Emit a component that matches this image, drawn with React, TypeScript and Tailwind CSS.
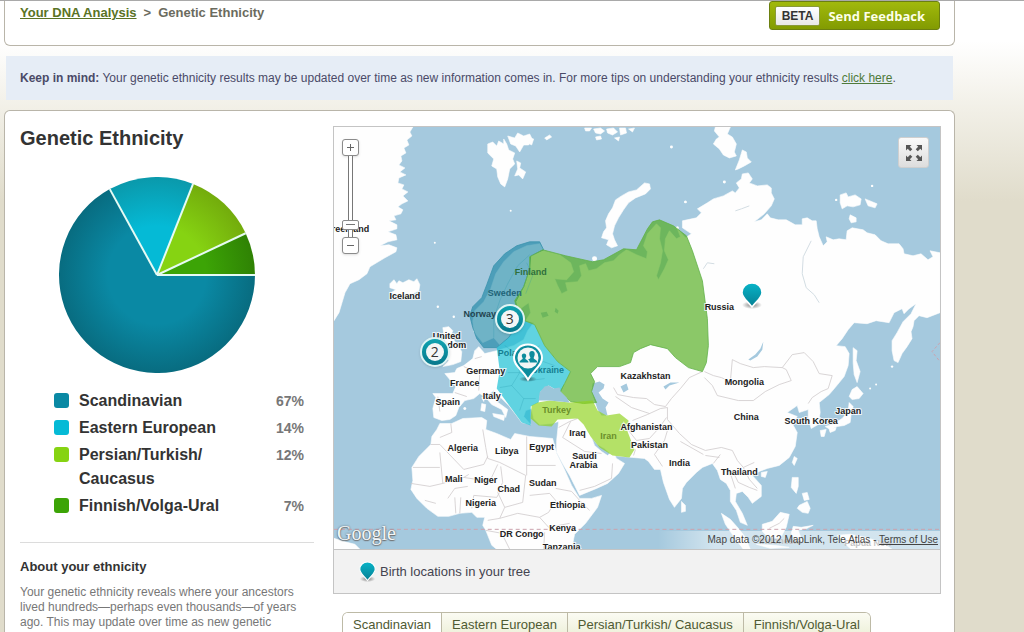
import React from 'react';

interface Ethnicity {
  name: string;
  percent: number;
  center: string;
  edge: string;
}

interface MapLabel {
  text: string;
  x: number;
  y: number;
  tint?: string;
}

const ethnicities: Ethnicity[] = [
  { name: 'Scandinavian', percent: 67, center: '#0a89a4', edge: '#086c80' },
  { name: 'Eastern European', percent: 14, center: '#05bad6', edge: '#0a99ab' },
  { name: 'Persian/Turkish/ Caucasus', percent: 12, center: '#86d312', edge: '#73ac0c' },
  { name: 'Finnish/Volga-Ural', percent: 7, center: '#3ca406', edge: '#2f8204' },
];

const labels: MapLabel[] = [
  { text: 'Greenland', x: 347, y: 231 },
  { text: 'Iceland', x: 405, y: 298 },
  { text: 'Finland', x: 531, y: 274, tint: '#2f6f3c' },
  { text: 'Sweden', x: 505, y: 295, tint: '#1f6478' },
  { text: 'Norway', x: 480, y: 316, tint: '#23434f' },
  { text: 'United', x: 447, y: 338 },
  { text: 'Kingdom', x: 447, y: 347 },
  { text: 'Poland', x: 513, y: 355, tint: '#157f92' },
  { text: 'Ukraine', x: 548, y: 372, tint: '#157f92' },
  { text: 'Germany', x: 486, y: 373 },
  { text: 'France', x: 465, y: 385 },
  { text: 'Italy', x: 492, y: 398 },
  { text: 'Spain', x: 448, y: 404 },
  { text: 'Turkey', x: 557, y: 412, tint: '#6b8f2b' },
  { text: 'Iran', x: 609, y: 439, tint: '#6b8f2b' },
  { text: 'Iraq', x: 578, y: 436 },
  { text: 'Saudi', x: 585, y: 459 },
  { text: 'Arabia', x: 584, y: 468 },
  { text: 'Algeria', x: 463, y: 451 },
  { text: 'Libya', x: 507, y: 454 },
  { text: 'Egypt', x: 542, y: 450 },
  { text: 'Mali', x: 454, y: 482 },
  { text: 'Niger', x: 486, y: 483 },
  { text: 'Chad', x: 509, y: 492 },
  { text: 'Sudan', x: 543, y: 486 },
  { text: 'Nigeria', x: 481, y: 506 },
  { text: 'Ethiopia', x: 568, y: 508 },
  { text: 'Kenya', x: 563, y: 531 },
  { text: 'DR Congo', x: 522, y: 537 },
  { text: 'Tanzania', x: 562, y: 550 },
  { text: 'Russia', x: 720, y: 309 },
  { text: 'Kazakhstan', x: 646, y: 378 },
  { text: 'Afghanistan', x: 647, y: 430 },
  { text: 'Pakistan', x: 650, y: 448 },
  { text: 'India', x: 680, y: 466 },
  { text: 'Mongolia', x: 745, y: 384 },
  { text: 'China', x: 747, y: 419 },
  { text: 'South Korea', x: 812, y: 423 },
  { text: 'Japan', x: 849, y: 413 },
  { text: 'Thailand', x: 740, y: 475 },
  { text: 'Indonesia', x: 781, y: 544, tint: '#8a8a8a' },
  { text: 'Papua New', x: 869, y: 546, tint: '#8a8a8a' },
];

const land = [
  // Greenland
  'M334 126H413L410 131 412 135 407 139 409 144 404 147 406 152 401 155 402 160 399 164 405 167 400 171 406 174 399 177 398 182 404 184 402 188 408 191 403 195 408 200 402 203 398 206 403 209 401 213 394 215 396 219 389 220 397 224 397 228 388 231 396 234 397 239 388 241 380 245 389 244 397 247 396 251 385 257 370 266 367 273 359 279 350 283 345 292 342 302 339 312 334 320Z',
  // Iceland
  'M390 283L394 279 397 283 399 280 403 282 409 279 414 281 417 278 420 284 419 290 413 293 405 296 397 294 391 292 396 289 390 287Z',
  // Svalbard
  'M488 143L493 141 497 145 499 140 504 143 504 138 507 143 509 149 515 152 513 158 515 163 510 168 508 178 505 186 501 183 498 176 497 168 492 165 494 158 488 152Z',
  'M508 135L515 137 518 132 524 135 530 133 533 139 529 144 524 144 520 151 516 145 511 143Z',
  'M517 160L521 162 520 167 526 171 523 178 519 174 515 175 518 168Z',
  // Novaya Zemlya
  'M645 182L650 183 651 188 646 193 636 197 629 202 624 209 619 217 615 225 613 233 615 239 618 245 612 247 607 244 609 239 602 237 604 231 607 227 606 220 609 213 613 207 616 199 622 195 629 191 637 189Z',
  // Franz Josef Land
  'M585 127H592L590 130 586 130ZM594 128L601 127 605 130 601 133 596 132ZM607 128L614 127 618 131 613 134 608 132ZM620 127H626L627 132 621 134ZM629 128L635 127 633 131ZM596 136L601 135 602 138 597 139ZM615 137L620 136 619 140ZM545 137L550 134 552 136 547 139ZM530 137L534 138 532 144 530 143Z',
  // Severnaya Zemlya
  'M716 126H731L728 133 733 136 737 143 735 151 737 155 730 157 724 154 720 148 714 143 717 138 720 136 715 130Z',
  'M743 149L747 151 748 157 752 161 745 165 739 168 736 169 740 159Z',
  // New Siberian Islands
  'M841 194L847 192 849 196 856 194 862 198 861 204 854 206 848 205 843 208 841 202ZM866 198L871 200 878 203 876 207 869 205ZM851 214L857 217 857 221 852 222 850 218Z',
  // Eurasia
  'M474 331L473 320 475 310 484 301 491 288 496 273 504 261 514 251 527 245 540 243 544 250 560 254 571 262 574 271 567 279 555 278 558 285 562 293 568 290 566 282 578 281 582 275 580 265 586 263 589 270 597 268 605 262 614 260 620 254 627 249 637 254 647 258 648 251 644 245 648 233 657 223 661 227 660 238 663 250 661 262 657 275 659 279 665 268 669 259 665 250 666 238 670 230 677 238 681 236 678 228 686 237 692 233 683 227 683 220 697 217 702 212 698 208 708 202 714 198 724 195 733 190 736 192 740 187 737 182 742 178 743 173 749 172 753 178 750 182 758 185 768 184 772 187 772 192 775 198 772 205 765 213 755 221 762 219 768 213 771 217 779 219 787 219 796 224 803 224 803 218 808 217 813 220 817 220 818 228 820 236 824 245 828 241 827 236 834 239 840 238 847 239 848 230 853 227 864 229 868 232 876 234 882 240 889 243 900 243 904 248 905 253 914 255 922 253 929 259 934 256 931 250 941 252V312L928 317 920 315 915 320 914 326 912 331 913 338 908 346 903 353 899 362 895 360 893 350 893 340 898 332 904 321 912 313 917 303 910 308 905 313 903 308 895 312 890 322 877 320 868 323 855 322 849 329 843 338 837 345 846 346 850 353 849 365 845 376 836 387 830 394 820 402 821 412 819 424 812 428 809 418 809 409 800 412 798 405 788 412 798 416 793 423 798 432 796 446 790 457 780 465 768 468 760 471 753 475 762 485 762 496 753 503 749 497 743 491 737 493 736 501 743 513 748 525 741 522 737 510 731 501 731 490 727 483 721 479 718 470 713 463 703 467 697 472 687 482 683 488 682 498 675 507 670 499 664 482 661 469 655 469 649 461 645 458 633 457 613 455 605 448 598 444 592 437 595 445 602 451 608 455 613 451 617 458 625 463 619 473 608 483 597 488 580 495 575 485 570 475 564 465 557 452V440L559 421 552 423 540 424 534 418 532 408 526 410 524 416 531 424 522 422 516 414 509 405 500 396 494 390 490 393 497 401 508 409 506 417 502 409 492 404 486 397 480 393 474 398 465 400 459 407 456 415 450 419 442 420 434 417 433 408 436 397 433 393 453 393 456 386 450 379 445 373 455 372 457 368 464 365 473 358 475 350 479 346 485 353 497 350 514 345 524 339 528 330 534 322 526 320 531 312 529 302 522 307 517 315 515 328 508 337 500 344 494 337 483 342Z',
  // Africa
  'M440 423L452 423 463 418 482 417 487 420 486 429 497 433 511 439 515 433 530 436 553 438 557 453 564 467 572 485 580 498 592 498 602 495 598 507 586 523 575 534 572 549H497L492 545 486 530 483 525 485 517 477 517 472 512 460 513 449 516 438 516 427 508 417 498 411 489 413 480 412 467 419 456 431 444 432 436 437 429Z',
  // British Isles
  'M443 327L449 326 453 330 451 335 456 342 462 351 461 361 453 364 443 366 449 360 444 356 448 349 445 340ZM428 344L436 341 438 349 432 357 425 355Z',
  // Corsica, Sardinia, Sicily
  'M482 403L486 404 485 411 481 410ZM493 413L505 415 504 420 494 416ZM482 397L485 396 484 401Z',
  // Sri Lanka
  'M682 501L686 505 686 511 682 512Z',
  // Japan and Sakhalin
  'M854 347L858 350 857 360 861 371 858 382 855 374 854 362ZM853 389L858 386 864 393 860 398 853 399 850 396ZM850 402L854 406 852 414 851 422 845 425 838 426 831 429 826 426 833 424 843 418 849 411ZM821 430L827 429 825 436 822 436ZM830 429L837 427 836 430 831 432Z',
  // Taiwan, Hainan, Philippines
  'M795 456L798 458 795 465 793 462ZM762 472L768 471 766 477 762 476ZM793 477L799 477 799 486 797 493 792 487ZM803 493L808 492 810 499 805 500ZM800 505L808 501 811 508 809 513 803 512 798 508Z',
  // Indonesia
  'M722 513L731 519 739 528 746 537 751 549H744L735 537 726 524ZM763 524L773 521 781 512 790 514 787 527 781 538 769 537 763 531ZM794 526L802 527 814 525 806 529 799 530 803 541 796 540 792 533ZM838 535L851 534 867 537 884 543 893 549H852L843 541ZM757 544L775 545 790 547 771 548Z',
  // Brazil
  'M334 538L343 541 355 544 360 549H334Z',
];

const water = [
  // Caspian
  'M593 383L600 381 605 384 604 388 599 392 603 398 609 402 606 407 608 415 602 415 598 409 595 400 592 391Z',
  // Aral and Balkhash
  'M621 386L627 383 629 389 624 392ZM664 386L671 382 680 382 670 385 666 389Z',
  // Baikal
  'M749 359L756 354 761 348 764 341 763 349 758 356 751 360Z',
  // Ladoga and Onega
  'M541 312L547 311 549 315 543 317ZM556 307L559 310 558 313 555 311Z',
];

const blackSea = 'M539 400L540 392 545 386 549 385 554 388 560 387 561 391 567 397 570 402 560 401 550 400Z';

const borders = [
  'M440 437L452 432 451 423M431 444H440L464 469 484 464 488 456M440 452L443 483 464 477 469 474M483 429L486 447 488 458 500 462 526 475M527 436V475M527 465H556M413 467H440M411 483L430 486 443 483M448 498L455 488 468 486M464 477L490 481 498 464M472 508L474 495 497 497 502 488M501 466L503 482 498 492 505 507 523 502 526 475M505 507L500 518 488 520M500 518L518 513 540 517M530 495L550 493 556 500 549 512 540 517 549 527 570 523M556 488L572 491 580 500 590 510M544 549L545 532M486 530L502 533 510 549M425 500L436 503M455 497L456 513M461 497L460 513',
  'M438 396L440 411M455 392L467 396M464 366L480 373 479 390M480 373L497 370M475 358L482 356M559 427L570 421 578 418M571 421L563 437 585 451 602 453M580 490L595 486 612 478 613 463M633 420L648 414 661 408 668 407M629 430L637 440 650 438 660 427 667 417M636 449L634 455',
  'M705 371L714 375 722 377 731 381M731 381L733 359 741 363 754 367 765 366 783 367 787 369 792 380 780 384 766 391 754 400 739 400 718 395 713 385 705 377M783 367L793 354 805 352 814 361 820 373 833 375 829 388 822 391 813 397 809 403M703 371L690 377 681 388 672 398 666 406 655 404 647 398 634 397 618 394 614 387M616 396L632 407 650 413M668 407L668 419 680 433 692 444 706 450 722 447 733 450 738 460 744 467 755 462M681 441L704 454M706 455L720 457M721 454L714 463M733 470L739 482 750 487 758 490M730 470L736 488M744 467L750 479 758 488M663 466L655 454 665 440 668 430M770 528L780 523 785 518',
];

const greenRegion =
  'M543 249L566 255 593 261 604 259 624 248 637 249 648 228 653 221 660 219 674 225 687 235 693 250 703 280 708 318 709 345 707 362 703 371 689 367 676 357 668 348 651 344 641 348 634 352 631 362 620 366 598 366 591 373 595 381 592 391 597 402 584 403 571 401 560 392 565 383 571 371 558 361 545 345 535 324 520 318 515 300 524 286 530 268 530 256Z';
const tealRegion =
  'M530 241L540 241 544 249 531 255 530 268 524 286 516 301 520 318 514 330 509 337 497 347 484 347 477 338 473 327 470 315 473 306 482 297 487 284 494 265 505 253 517 245Z';
const cyanRegion =
  'M520 318L535 324 545 345 558 361 571 371 565 383 561 392 549 385 541 391 539 402 531 406 531 425 522 422 511 407 497 388 500 370 497 347 509 337 514 330Z';
const limeRegion =
  'M532 405L538 402 550 400 570 402 593 400 598 410 607 415 620 413 629 420 628 431 635 449 630 457 613 455 600 447 591 436 584 424 578 418 558 419 552 426 539 425 531 418Z';

function polar(turn: number, radius: number) {
  const angle = turn * Math.PI * 2;
  return `${98 + radius * Math.cos(angle)} ${98 + radius * Math.sin(angle)}`;
}

function PieChart() {
  let start = 0;
  const slices = ethnicities.map((item) => {
    const from = start;
    start += item.percent / 100;
    return { ...item, from, to: start };
  });

  return (
    <svg viewBox="0 0 196 196" className="block w-[196px]" role="img" aria-label="Ethnicity pie chart">
      <defs>
        {slices.map((slice, i) => (
          <radialGradient key={slice.name} id={`slice-${i}`} gradientUnits="userSpaceOnUse" cx="98" cy="98" r="98">
            <stop offset="0.5" stopColor={slice.center} />
            <stop offset="1" stopColor={slice.edge} />
          </radialGradient>
        ))}
      </defs>
      {slices.map((slice, i) => (
        <path
          key={slice.name}
          d={`M98 98L${polar(slice.from, 98)}A98 98 0 ${slice.percent > 50 ? 1 : 0} 1 ${polar(slice.to, 98)}Z`}
          fill={`url(#slice-${i})`}
        />
      ))}
      {slices.map((slice) => (
        <path key={slice.name} d={`M98 98L${polar(slice.from, 98)}`} stroke="#e6fbf4" strokeWidth="2" />
      ))}
    </svg>
  );
}

function Legend() {
  return (
    <ul className="flex flex-col gap-[3px] pr-[10px] pl-[34px]">
      {ethnicities.map((item) => (
        <li key={item.name} className="flex items-start leading-6">
          <span
            className="mt-1 h-[15px] w-[15px] shrink-0 rounded-[3px]"
            style={{ backgroundColor: item.center }}
          />
          <span className="ml-[10px] w-[150px] text-base leading-6 font-bold text-[#333333]">{item.name}</span>
          <span className="ml-auto text-sm leading-6 font-bold text-[#777777]">{item.percent}%</span>
        </li>
      ))}
    </ul>
  );
}

function PinIcon({ className }: { className: string }) {
  return (
    <svg viewBox="0 0 22 28" className={className}>
      <defs>
        <linearGradient id="pin-fill" x1="0" y1="0" x2="0" y2="1">
          <stop offset="0" stopColor="#08b4c8" />
          <stop offset="1" stopColor="#067f93" />
        </linearGradient>
        <radialGradient id="pin-shadow">
          <stop offset="0.3" stopColor="#000" stopOpacity="0.35" />
          <stop offset="1" stopColor="#000" stopOpacity="0" />
        </radialGradient>
      </defs>
      <ellipse cx="11" cy="23" rx="10" ry="4" fill="url(#pin-shadow)" />
      <path
        d="M11 1C5.500 1 1 5 1 10.500C1 15.500 6 18.500 11 25C16 18.500 21 15.500 21 10.500C21 5 16.500 1 11 1Z"
        fill="url(#pin-fill)"
        stroke="#fff"
        strokeWidth="1.500"
      />
    </svg>
  );
}

function GroupPinIcon() {
  return (
    <svg viewBox="0 0 32 40" className="block h-10 w-8">
      <ellipse cx="16" cy="36" rx="9" ry="3" fill="url(#pin-shadow)" />
      <path
        d="M16 1.500C8 1.500 2 7.500 2 15C2 23 10 26 16 36.500C22 26 30 23 30 15C30 7.500 24 1.500 16 1.500Z"
        fill="#0d8c9d"
        stroke="#fff"
        strokeWidth="2"
      />
      <circle cx="16" cy="15" r="10.500" fill="#f3f6f6" />
      <path
        d="M12 10.500C13.500 10.500 14.300 11.500 14.200 13C14.100 14.300 13.300 14.800 13.300 15.600C13.300 16.800 16.500 17 16.500 19.500H7.500C7.500 17 10.700 16.800 10.700 15.600C10.700 14.800 9.900 14.300 9.800 13C9.700 11.500 10.500 10.500 12 10.500Z"
        fill="#0d8c9d"
      />
      <path
        d="M20 8C22 8 22.900 9.500 22.700 11.500C22.600 13.200 21.700 13.800 21.700 15C21.700 16.500 25.300 16.500 25.300 19.500H17.800C17.800 18 17 16.700 16 16.200C17.500 15.900 18.400 15.700 18.400 14.700C18.400 13.800 17.400 13.200 17.300 11.500C17.100 9.500 18 8 20 8Z"
        fill="#0d8c9d"
      />
    </svg>
  );
}

function MapMarker({ x, y, label, children }: { x: number; y: number; label: string; children: React.ReactNode }) {
  return (
    <button
      type="button"
      aria-label={label}
      className="absolute -translate-x-1/2 -translate-y-1/2 cursor-pointer"
      style={{ left: `${((x - 334) / 607) * 100}%`, top: `${((y - 126) / 423) * 100}%` }}
    >
      {children}
    </button>
  );
}

function Cluster({ count }: { count: number }) {
  return (
    <span className="flex h-[30px] w-[30px] items-center justify-center rounded-full border-2 border-[#dff4f4] bg-linear-to-b from-[#10a3b0] to-[#08788c] shadow">
      <span className="flex h-[18px] w-[18px] items-center justify-center rounded-full bg-[#f4f6f6] font-['Open_Sans',sans-serif] text-sm leading-none text-[#333333]">
        {count}
      </span>
    </span>
  );
}

function ZoomControl() {
  const button =
    'flex h-[17px] w-[17px] items-center justify-center rounded-[3px] border border-[#8b8b8b] bg-white text-[#666666] shadow';
  return (
    <div className="absolute top-3 left-2 flex flex-col items-center">
      <button type="button" aria-label="Zoom in" className={button}>
        <svg viewBox="0 0 9 9" className="h-[9px] w-[9px]">
          <path d="M4 1H5V4H8V5H5V8H4V5H1V4H4Z" fill="currentColor" />
        </svg>
      </button>
      <input
        type="range"
        aria-label="Zoom level"
        min="0"
        max="20"
        defaultValue="2"
        className="h-[81px] w-[17px] appearance-none bg-[linear-gradient(90deg,transparent_6px,#777_6px,#777_7px,#fff_7px,#fff_10px,#777_10px,#777_11px,transparent_11px)] [direction:rtl] [writing-mode:vertical-lr] [&::-webkit-slider-thumb]:h-[10px] [&::-webkit-slider-thumb]:w-[17px] [&::-webkit-slider-thumb]:appearance-none [&::-webkit-slider-thumb]:rounded-[2px] [&::-webkit-slider-thumb]:border [&::-webkit-slider-thumb]:border-[#8b8b8b] [&::-webkit-slider-thumb]:bg-white [&::-webkit-slider-thumb]:bg-[linear-gradient(#777,#777)] [&::-webkit-slider-thumb]:bg-[length:9px_1px] [&::-webkit-slider-thumb]:bg-center [&::-webkit-slider-thumb]:bg-no-repeat"
      />
      <button type="button" aria-label="Zoom out" className={button}>
        <svg viewBox="0 0 9 9" className="h-[9px] w-[9px]">
          <path d="M1 4H8V5H1Z" fill="currentColor" />
        </svg>
      </button>
    </div>
  );
}

function EthnicityMap() {
  return (
    <div className="relative overflow-hidden">
      <svg viewBox="334 126 607 423" className="block w-full" role="img" aria-label="Ethnicity map">
        <rect x="334" y="126" width="607" height="423" fill="#a5c9de" />
        <g fill="#fefefe" stroke="#fefefe" strokeWidth="0.600" strokeLinejoin="round">
          {land.map((d) => (
            <path key={d} d={d} />
          ))}
        </g>
        <g fill="#a5c9de">
          {water.map((d) => (
            <path key={d} d={d} />
          ))}
        </g>
        <g fill="none" stroke="#cfcacb" strokeWidth="0.800" strokeLinejoin="round">
          {borders.map((d) => (
            <path key={d} d={d} />
          ))}
        </g>
        <path
          d="M812 240L804 256 803 273 807 287 815 294 820 302M736 210L742 208 750 205M704 268L708 262 715 263"
          fill="none"
          stroke="#d3dde3"
        />
        <g fill="#fefefe">
          <circle cx="595" cy="258" r="2.500" />
          <circle cx="678" cy="227" r="1.500" />
          <circle cx="686" cy="201" r="1.500" />
          <circle cx="725" cy="181" r="1.500" />
          <circle cx="672" cy="146" r="1.500" />
          <circle cx="837" cy="199" r="1.200" />
          <circle cx="873" cy="185" r="1.200" />
          <circle cx="511" cy="210" r="1" />
          <circle cx="435" cy="242" r="1" />
          <circle cx="438" cy="306" r="1.200" />
          <circle cx="454" cy="316" r="1.200" />
          <circle cx="465" cy="408" r="1.500" />
          <circle cx="893" cy="366" r="1.200" />
          <circle cx="871" cy="388" r="1" />
          <circle cx="877" cy="384" r="1" />
        </g>
        <path d={tealRegion} fill="#1684a3" fillOpacity="0.620" stroke="#3c93ad" strokeWidth="0.800" />
        <path d={cyanRegion} fill="#12bdd2" fillOpacity="0.670" />
        <path d={greenRegion} fill="#52ad1e" fillOpacity="0.670" stroke="#62b14a" strokeWidth="0.800" />
        <path d={limeRegion} fill="#8fd31c" fillOpacity="0.670" />
        <path d={blackSea} fill="#9cc6da" />
        <g fill="none" stroke="#1f93a8" strokeOpacity="0.350" strokeWidth="0.700">
          <path d="M505 345L515 352 530 352 540 345M508 372L520 372 530 380 545 378M515 352L520 372 512 385 524 398 536 398M500 387L512 385M520 410L524 398M537 345L541 360 555 365M494 337L494 318 500 300 508 283 518 265 530 254M527 262L533 275 526 293" />
        </g>
        <path d="M334 529H941" stroke="#cba3ae" strokeDasharray="4 3" fill="none" />
        <path d="M941 342L933 351 941 361" stroke="#cba3ae" strokeDasharray="3 2" fill="none" />
        <g
          className="font-['Liberation_Sans',Arial,sans-serif] text-[9px] font-bold"
          textAnchor="middle"
          aria-hidden="true"
        >
          {labels.map((label) => (
            <text
              key={label.text}
              x={label.x}
              y={label.y}
              fill={label.tint ?? '#222222'}
              stroke={label.tint ? 'none' : '#ffffff'}
              strokeWidth="2"
              strokeOpacity="0.800"
              paintOrder="stroke"
            >
              {label.text}
            </text>
          ))}
        </g>
      </svg>

      <ZoomControl />

      <button
        type="button"
        aria-label="Full screen"
        className="absolute top-[10px] right-[11px] flex h-[31px] w-[31px] items-center justify-center rounded-[3px] border border-[#cfcfcf] bg-linear-to-b from-[#fafafa] to-[#dddddd]"
      >
        <svg viewBox="0 0 18 18" className="h-[18px] w-[18px]" fill="#555555">
          <path d="M1 1H6.500L4.800 2.700 7.300 5.200 5.200 7.300 2.700 4.800 1 6.500Z" />
          <path d="M17 1V6.500L15.300 4.800 12.800 7.300 10.700 5.200 13.200 2.700 11.500 1Z" />
          <path d="M1 17V11.500L2.700 13.200 5.200 10.700 7.300 12.800 4.800 15.300 6.500 17Z" />
          <path d="M17 17H11.500L13.200 15.300 10.700 12.800 12.800 10.700 15.300 13.200 17 11.500Z" />
        </svg>
      </button>

      <MapMarker x={510} y={318} label="3 birth locations">
        <Cluster count={3} />
      </MapMarker>
      <MapMarker x={435} y={351} label="2 birth locations">
        <Cluster count={2} />
      </MapMarker>
      <MapMarker x={528} y={362} label="Family group">
        <GroupPinIcon />
      </MapMarker>
      <MapMarker x={753} y={295} label="Birth location in Russia">
        <PinIcon className="block h-7 w-[22px]" />
      </MapMarker>

      <span className="absolute bottom-1 left-[3px] font-['Liberation_Serif',serif] text-xl leading-6 text-[#f2f6f8] [text-shadow:0_0_2px_#555,0_1px_1px_#777]">
        Google
      </span>
      <p className="absolute right-0 bottom-0 bg-linear-to-r from-transparent to-white/50 to-20% pr-[2px] pl-[50px] text-[10px] leading-[18px] text-[#444444]">
        Map data ©2012 MapLink, Tele Atlas -{' '}
        <a href="#terms" className="underline">
          Terms of Use
        </a>
      </p>
    </div>
  );
}

function RegionTabs() {
  return (
    <div role="tablist" className="ml-[9px] flex overflow-hidden rounded-t-md border border-b-0 border-[#bdbaa6]">
      {ethnicities.map((item, i) => (
        <button
          key={item.name}
          type="button"
          role="tab"
          aria-selected={i === 0}
          className={
            i === 0
              ? 'bg-white px-[10px] pt-1 text-[13px] leading-4 text-[#4f5a33]'
              : 'border-l border-[#bdbaa6] bg-linear-to-b from-[#fbfbf3] to-[#eff1dc] px-[10px] pt-1 text-[13px] leading-4 text-[#4f5a33]'
          }
        >
          {item.name}
        </button>
      ))}
    </div>
  );
}

export default function App() {
  return (
    <div className="flex min-h-screen flex-col border-t border-[#a9a9a9] bg-[linear-gradient(#ffffff_40px,#f1efe6_110px,#e0dccb_200px)] font-['Liberation_Sans',Arial,sans-serif]">
      <div className="ml-1 flex w-full max-w-[951px] flex-1 flex-col">
        <header className="flex items-start justify-between rounded-b-md border border-t-0 border-[#b9b5a9] bg-white pr-[14px] pb-[15px] pl-[15px]">
          <nav className="flex gap-[7px] pt-1 text-[13px] leading-4 font-bold text-[#6b6b5e]">
            <a href="#dna" className="text-[#5a7325] underline">
              Your DNA Analysis
            </a>
            <span>&gt;</span>
            <span>Genetic Ethnicity</span>
          </nav>
          <button
            type="button"
            className="flex h-[29px] items-center gap-2 rounded-[3px] border border-[#6c8010] bg-linear-to-b from-[#a1b90c] to-[#829b02] pr-[14px] pl-[5px]"
          >
            <span className="rounded-[2px] border border-[#8a9a3a] bg-linear-to-b from-white to-[#e8e8e8] px-[6px] text-xs leading-[18px] font-bold text-[#333333]">
              BETA
            </span>
            <span className="font-['Open_Sans',sans-serif] text-[13px] leading-4 font-bold text-[#fdffe8]">
              Send Feedback
            </span>
          </button>
        </header>

        <p className="mx-[2px] mt-[10px] bg-[#e6edf6] px-[14px] py-[14px] text-xs leading-4 text-[#4a4a68]">
          <strong>Keep in mind:</strong> Your genetic ethnicity results may be updated over time as new information
          comes in. For more tips on understanding your ethnicity results{' '}
          <a href="#tips" className="text-[#4f7a3a] underline">
            click here
          </a>
          .
        </p>

        <main className="mt-[10px] grid flex-1 grid-cols-[294px_1fr] gap-x-[19px] rounded-t-md border border-b-0 border-[#b9b5a9] bg-white pt-[15px] pr-[13px] pl-[15px]">
          <section>
            <h1 className="text-xl leading-6 font-bold text-[#333333]">Genetic Ethnicity</h1>
            <div className="mt-[27px] mb-4 ml-[39px]">
              <PieChart />
            </div>
            <Legend />
            <hr className="mt-6 border-[#dcdcdc]" />
            <h2 className="mt-4 text-[13px] leading-4 font-bold text-[#333333]">About your ethnicity</h2>
            <p className="mt-[10px] text-xs leading-[15px] text-[#777777]">
              Your genetic ethnicity reveals where your ancestors lived hundreds—perhaps even thousands—of years ago.
              This may update over time as new genetic
            </p>
          </section>

          <section className="flex min-w-0 flex-col">
            <div className="border border-[#c4c4c4]">
              <EthnicityMap />
              <div className="flex h-[44px] items-center gap-1 border-t border-[#c4c4c4] bg-[#f2f2f2] pl-[25px] text-[13px] text-[#444450]">
                <PinIcon className="h-[22px] w-[17px]" />
                Birth locations in your tree
              </div>
            </div>
            <div className="mt-[18px] flex flex-1">
              <RegionTabs />
            </div>
          </section>
        </main>
      </div>
    </div>
  );
}
